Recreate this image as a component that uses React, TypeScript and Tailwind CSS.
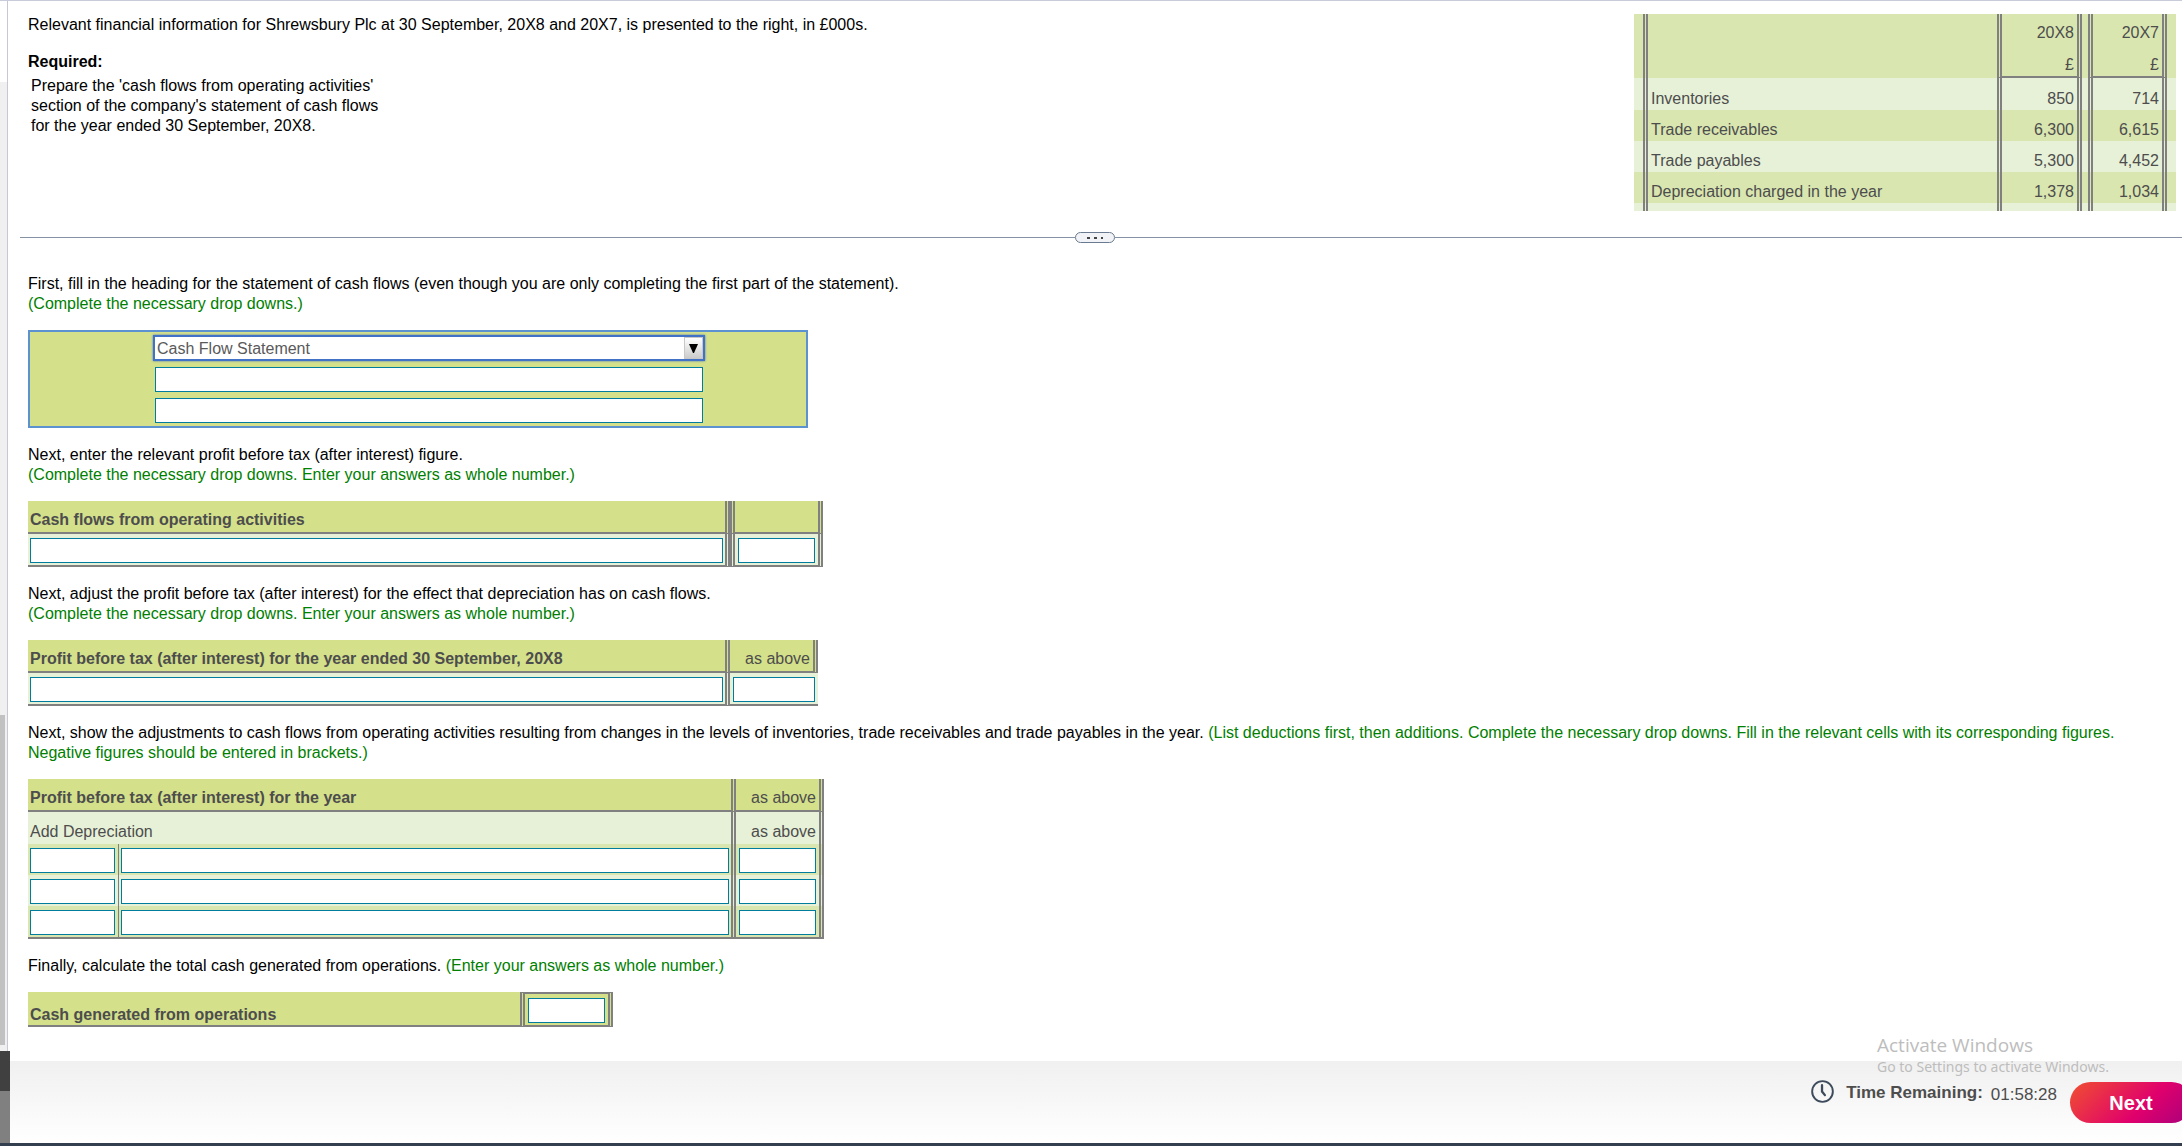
import { useState } from 'react'
import type { ReactNode } from 'react'

type FieldProps = {
  label: string
  className?: string
}

const balances = [
  { name: 'Inventories', current: '850', previous: '714' },
  { name: 'Trade receivables', current: '6,300', previous: '6,615' },
  { name: 'Trade payables', current: '5,300', previous: '4,452' },
  { name: 'Depreciation charged in the year', current: '1,378', previous: '1,034' },
]

const adjustments = [1, 2, 3]

function Field({ label, className = 'w-full' }: FieldProps) {
  const [value, setValue] = useState('')

  return (
    <input
      type="text"
      aria-label={label}
      value={value}
      onChange={(e) => setValue(e.target.value)}
      className={`block h-[25px] border border-[#007c9c] bg-white px-1 outline-none ${className}`}
    />
  )
}

function Hint({ children }: { children: ReactNode }) {
  return <span className="text-[#008000]">{children}</span>
}

function BalancesTable() {
  const yearHead = 'border-x-[5px] border-double border-[#808080] px-[3px] pt-2 pb-[3px] text-right font-normal'
  const unitHead =
    'border-x-[5px] border-b-2 border-[#808080] px-[3px] pt-2 text-right font-normal [border-style:solid_double]'
  const yearCell = 'border-x-[5px] border-double border-[#808080] px-[3px] pt-[10px] pb-px text-right'

  return (
    <table className="w-[542px] shrink-0 table-fixed border-separate border-spacing-0 text-[#4d4d4d]">
      <colgroup>
        <col className="w-[9px]" />
        <col className="w-[354px]" />
        <col className="w-[85px]" />
        <col className="w-[6px]" />
        <col className="w-[79px]" />
        <col className="w-[9px]" />
      </colgroup>
      <thead>
        <tr className="h-8 bg-[#d9e6b0]">
          <td />
          <td className="border-l-[5px] border-double border-[#808080]" />
          <th className={yearHead}>20X8</th>
          <td />
          <th className={yearHead}>20X7</th>
          <td />
        </tr>
        <tr className="h-8 bg-[#d9e6b0]">
          <td />
          <td className="border-l-[5px] border-double border-[#808080]" />
          <th className={unitHead}>£</th>
          <td />
          <th className={unitHead}>£</th>
          <td />
        </tr>
      </thead>
      <tbody>
        {balances.map((row) => (
          <tr key={row.name} className="h-[31px] odd:bg-[#e7f1d8] even:bg-[#d9e6b0] first:h-8">
            <td />
            <th className="border-l-[5px] border-double border-[#808080] px-[3px] pt-[10px] pb-px text-left font-normal">
              {row.name}
            </th>
            <td className={yearCell}>{row.current}</td>
            <td />
            <td className={yearCell}>{row.previous}</td>
            <td />
          </tr>
        ))}
        <tr className="h-2 bg-[#e7f1d8]">
          <td />
          <td className="border-l-[5px] border-double border-[#808080]" />
          <td className="border-x-[5px] border-double border-[#808080]" />
          <td />
          <td className="border-x-[5px] border-double border-[#808080]" />
          <td />
        </tr>
      </tbody>
    </table>
  )
}

function HeadingForm() {
  const [heading, setHeading] = useState('Cash Flow Statement')

  return (
    <div className="flex w-[780px] flex-col gap-[6px] border-2 border-[#5b92cf] bg-[#d4e08a] pt-[3px] pb-[3px] pl-[123px]">
      <div className="relative w-[552px]">
        <select
          aria-label="Statement heading"
          value={heading}
          onChange={(e) => setHeading(e.target.value)}
          className="block h-[26px] w-full appearance-none border-2 border-[#4272c8] bg-white pt-px pl-[2px] leading-5 text-[#5a5a5a] shadow-[0_0_2px_#4272c8] outline-none"
        >
          <option>Cash Flow Statement</option>
          <option>Income Statement</option>
          <option>Balance Sheet</option>
        </select>
        <span className="pointer-events-none absolute top-[2px] right-[2px] flex h-[22px] w-[19px] items-center justify-center border border-[#c8c8c8] bg-linear-to-b from-white to-[#cccccc]">
          <svg viewBox="0 0 9 9" className="h-[9px] w-[9px]">
            <path d="M0 0h9L5 9H4z" fill="#000" />
          </svg>
        </span>
      </div>
      <Field label="Company name" className="ml-[2px] w-[548px]" />
      <Field label="Period" className="ml-[2px] w-[548px]" />
    </div>
  )
}

const headCell = 'border-b-2 border-[#808080] px-[2px] pt-[9px] pb-[2px] text-left font-bold'
const amountCell = 'border-b-2 border-[#808080]'

function ProfitTable() {
  return (
    <table className="w-[795px] table-fixed border-separate border-spacing-0 text-[#4d4d4d]">
      <colgroup>
        <col className="w-[702px]" />
        <col className="w-[93px]" />
      </colgroup>
      <thead>
        <tr className="h-[33px] bg-[#d4e08a]">
          <th className={`${headCell} border-r-[5px] [border-style:solid_double]`}>Cash flows from operating activities</th>
          <th className={`${amountCell} border-x-[5px] [border-style:solid_double]`} />
        </tr>
      </thead>
      <tbody>
        <tr className="h-[33px] bg-[#e7f1d8]">
          <td className="border-r-[5px] border-b-2 border-[#808080] px-[2px] pt-[2px] [border-style:solid_double]">
            <Field label="Profit line" />
          </td>
          <td className="border-x-[5px] border-b-2 border-[#808080] px-[3px] pt-[2px] [border-style:solid_double]">
            <Field label="Profit amount" />
          </td>
        </tr>
      </tbody>
    </table>
  )
}

function DepreciationTable() {
  return (
    <table className="w-[790px] table-fixed border-separate border-spacing-0 text-[#4d4d4d]">
      <colgroup>
        <col className="w-[702px]" />
        <col className="w-[88px]" />
      </colgroup>
      <thead>
        <tr className="h-[33px] bg-[#d4e08a]">
          <th className={`${headCell} border-r-[5px] [border-style:solid_double]`}>
            Profit before tax (after interest) for the year ended 30 September, 20X8
          </th>
          <td className={`${amountCell} border-r-[5px] px-[3px] pt-[9px] pb-[2px] text-right [border-style:solid_double]`}>
            as above
          </td>
        </tr>
      </thead>
      <tbody>
        <tr className="h-[33px] bg-[#e7f1d8]">
          <td className="border-r-[5px] border-b-2 border-[#808080] px-[2px] pt-[2px] [border-style:solid_double]">
            <Field label="Depreciation line" />
          </td>
          <td className="border-b-2 border-[#808080] px-[3px] pt-[2px]">
            <Field label="Depreciation amount" />
          </td>
        </tr>
      </tbody>
    </table>
  )
}

function AdjustmentsTable() {
  return (
    <table className="w-[796px] table-fixed border-separate border-spacing-0 border-b-2 border-[#808080] text-[#4d4d4d]">
      <colgroup>
        <col className="w-[91px]" />
        <col className="w-[617px]" />
        <col className="w-[88px]" />
      </colgroup>
      <thead>
        <tr className="h-[33px] bg-[#d4e08a]">
          <th colSpan={2} className={`${headCell} border-r-[5px] [border-style:solid_double]`}>
            Profit before tax (after interest) for the year
          </th>
          <td className={`${amountCell} border-r-[5px] px-[3px] pt-[9px] pb-[2px] text-right [border-style:solid_double]`}>
            as above
          </td>
        </tr>
      </thead>
      <tbody>
        <tr className="h-8 bg-[#e7f1d8]">
          <th
            colSpan={2}
            className="border-r-[5px] border-double border-[#808080] px-[2px] pt-[10px] pb-[2px] text-left font-normal"
          >
            Add Depreciation
          </th>
          <td className="border-r-[5px] border-double border-[#808080] px-[3px] pt-[10px] pb-[2px] text-right">as above</td>
        </tr>
        {adjustments.map((n) => (
          <tr key={n} className="h-[31px] odd:bg-[#e7f1d8] even:bg-[#d9e6b0]">
            <td className="border-r border-[#808080] pt-[2px] pr-[3px] pl-[2px]">
              <Field label={`Adjustment ${n} type`} />
            </td>
            <td className="border-r-[5px] border-double border-[#808080] px-[2px] pt-[2px]">
              <Field label={`Adjustment ${n} item`} />
            </td>
            <td className="border-r-[5px] border-double border-[#808080] px-[3px] pt-[2px]">
              <Field label={`Adjustment ${n} amount`} />
            </td>
          </tr>
        ))}
      </tbody>
    </table>
  )
}

function TotalTable() {
  return (
    <table className="w-[585px] table-fixed border-separate border-spacing-0 text-[#4d4d4d]">
      <colgroup>
        <col className="w-[492px]" />
        <col className="w-[93px]" />
      </colgroup>
      <tbody>
        <tr className="h-[35px] bg-[#d4e08a]">
          <th className="border-b-2 border-[#808080] px-[2px] pt-3 text-left font-bold">Cash generated from operations</th>
          <td className="border-x-[5px] border-y-2 border-[#808080] px-[3px] pt-[2px] [border-style:solid_double]">
            <Field label="Cash generated from operations" />
          </td>
        </tr>
      </tbody>
    </table>
  )
}

function Footer() {
  return (
    <footer className="relative border-b-[3px] border-[#333f50] bg-linear-to-b from-[#f0f0f0] to-white">
      <div className="absolute bottom-0 left-0 flex h-[92px] w-[10px] flex-col">
        <div className="h-10 bg-[#404040]" />
        <div className="flex-1 bg-[#808080]" />
      </div>

      <div className="flex h-[82px] items-start justify-end overflow-hidden">
        <svg viewBox="0 0 24 24" className="mt-[19px] mr-3 h-[23px] w-[23px]" fill="none" stroke="#3d4b5c" strokeWidth="2">
          <circle cx="12" cy="12" r="10.8" />
          <path d="M11.5 5.5v6.5l3 3.8" strokeWidth="2.4" strokeLinecap="round" />
        </svg>
        <div className="mt-[21px] flex items-start text-[17px] leading-[22px] text-[#4d4d4d]">
          <strong className="mr-2">Time Remaining:</strong>
          <span className="mt-[2px]">01:58:28</span>
        </div>
        <button
          type="button"
          className="mt-[21px] -mr-[10px] ml-[13px] h-[41px] w-[122px] shrink-0 cursor-pointer rounded-full bg-linear-[135deg] from-[#f05030] via-[#e0006c] via-60% to-[#a8007c] text-xl leading-6 font-bold text-white"
        >
          Next
        </button>
      </div>

      <div className="pointer-events-none absolute -top-[28px] right-[69px] w-[236px] whitespace-nowrap text-[#bdbdbd]">
        <p className="font-['Open_Sans',sans-serif] text-[19px] leading-[24px]">Activate Windows</p>
        <p className="font-['Noto_Sans',sans-serif] text-sm leading-5">Go to Settings to activate Windows.</p>
      </div>
    </footer>
  )
}

export default function App() {
  return (
    <div className="flex min-h-screen flex-col border-t border-[#c8ccda] bg-white font-['Liberation_Sans',Arial,sans-serif] text-base leading-5 text-black">
      <div className="flex flex-1">
        {/* edge of the question list with its scrollbar */}
        <aside className="flex w-2 shrink-0 flex-col border-r border-[#c8c8d4]">
          <div className="h-[81px]" />
          <div className="flex flex-1 flex-col justify-end bg-[#f0f0f0] pb-4">
            <div className="h-[330px] w-[5px] bg-[#c1c1c1]" />
          </div>
        </aside>

        <main className="min-w-0 flex-1">
          <section className="flex items-start justify-between pt-[13px] pr-[6px] pb-[21px] pl-5">
            <div className="pt-px">
              <p>Relevant financial information for Shrewsbury Plc at 30 September, 20X8 and 20X7, is presented to the right, in £000s.</p>
              <h1 className="mt-[17px] font-bold">Required:</h1>
              <p className="mt-1 w-[360px] pl-[3px]">
                Prepare the 'cash flows from operating activities' section of the company's statement of cash flows for the year ended
                30 September, 20X8.
              </p>
            </div>
            <BalancesTable />
          </section>

          <div className="flex items-center">
            <div className="flex-1">
              <div className="ml-3 h-px bg-[#8592a6]" />
            </div>
            <button
              type="button"
              aria-label="Resize panels"
              className="flex h-[11px] w-10 cursor-pointer items-center justify-center gap-1 rounded-full border border-[#6a7a90] bg-[#f2f3f6]"
            >
              <span className="h-[2px] w-[3px] bg-[#444]" />
              <span className="h-[2px] w-[3px] bg-[#444]" />
              <span className="h-[2px] w-[2px] bg-[#444]" />
            </button>
            <div className="h-px flex-1 bg-[#8592a6]" />
          </div>

          <section className="flex flex-col gap-[17px] pt-[31px] pr-6 pb-8 pl-5">
            <div className="flex flex-col gap-4">
              <p>
                First, fill in the heading for the statement of cash flows (even though you are only completing the first part of the
                statement).
                <br />
                <Hint>(Complete the necessary drop downs.)</Hint>
              </p>
              <HeadingForm />
            </div>

            <div className="flex flex-col gap-4">
              <p>
                Next, enter the relevant profit before tax (after interest) figure.
                <br />
                <Hint>(Complete the necessary drop downs. Enter your answers as whole number.)</Hint>
              </p>
              <ProfitTable />
            </div>

            <div className="flex flex-col gap-4">
              <p>
                Next, adjust the profit before tax (after interest) for the effect that depreciation has on cash flows.
                <br />
                <Hint>(Complete the necessary drop downs. Enter your answers as whole number.)</Hint>
              </p>
              <DepreciationTable />
            </div>

            <div className="flex flex-col gap-4">
              <p>
                Next, show the adjustments to cash flows from operating activities resulting from changes in the levels of
                inventories, trade receivables and trade payables in the year.{' '}
                <Hint>
                  (List deductions first, then additions. Complete the necessary drop downs. Fill in the relevant cells with its
                  corresponding figures. Negative figures should be entered in brackets.)
                </Hint>
              </p>
              <AdjustmentsTable />
            </div>

            <div className="flex flex-col gap-4">
              <p>
                Finally, calculate the total cash generated from operations. <Hint>(Enter your answers as whole number.)</Hint>
              </p>
              <TotalTable />
            </div>
          </section>
        </main>
      </div>
      <Footer />
    </div>
  )
}
